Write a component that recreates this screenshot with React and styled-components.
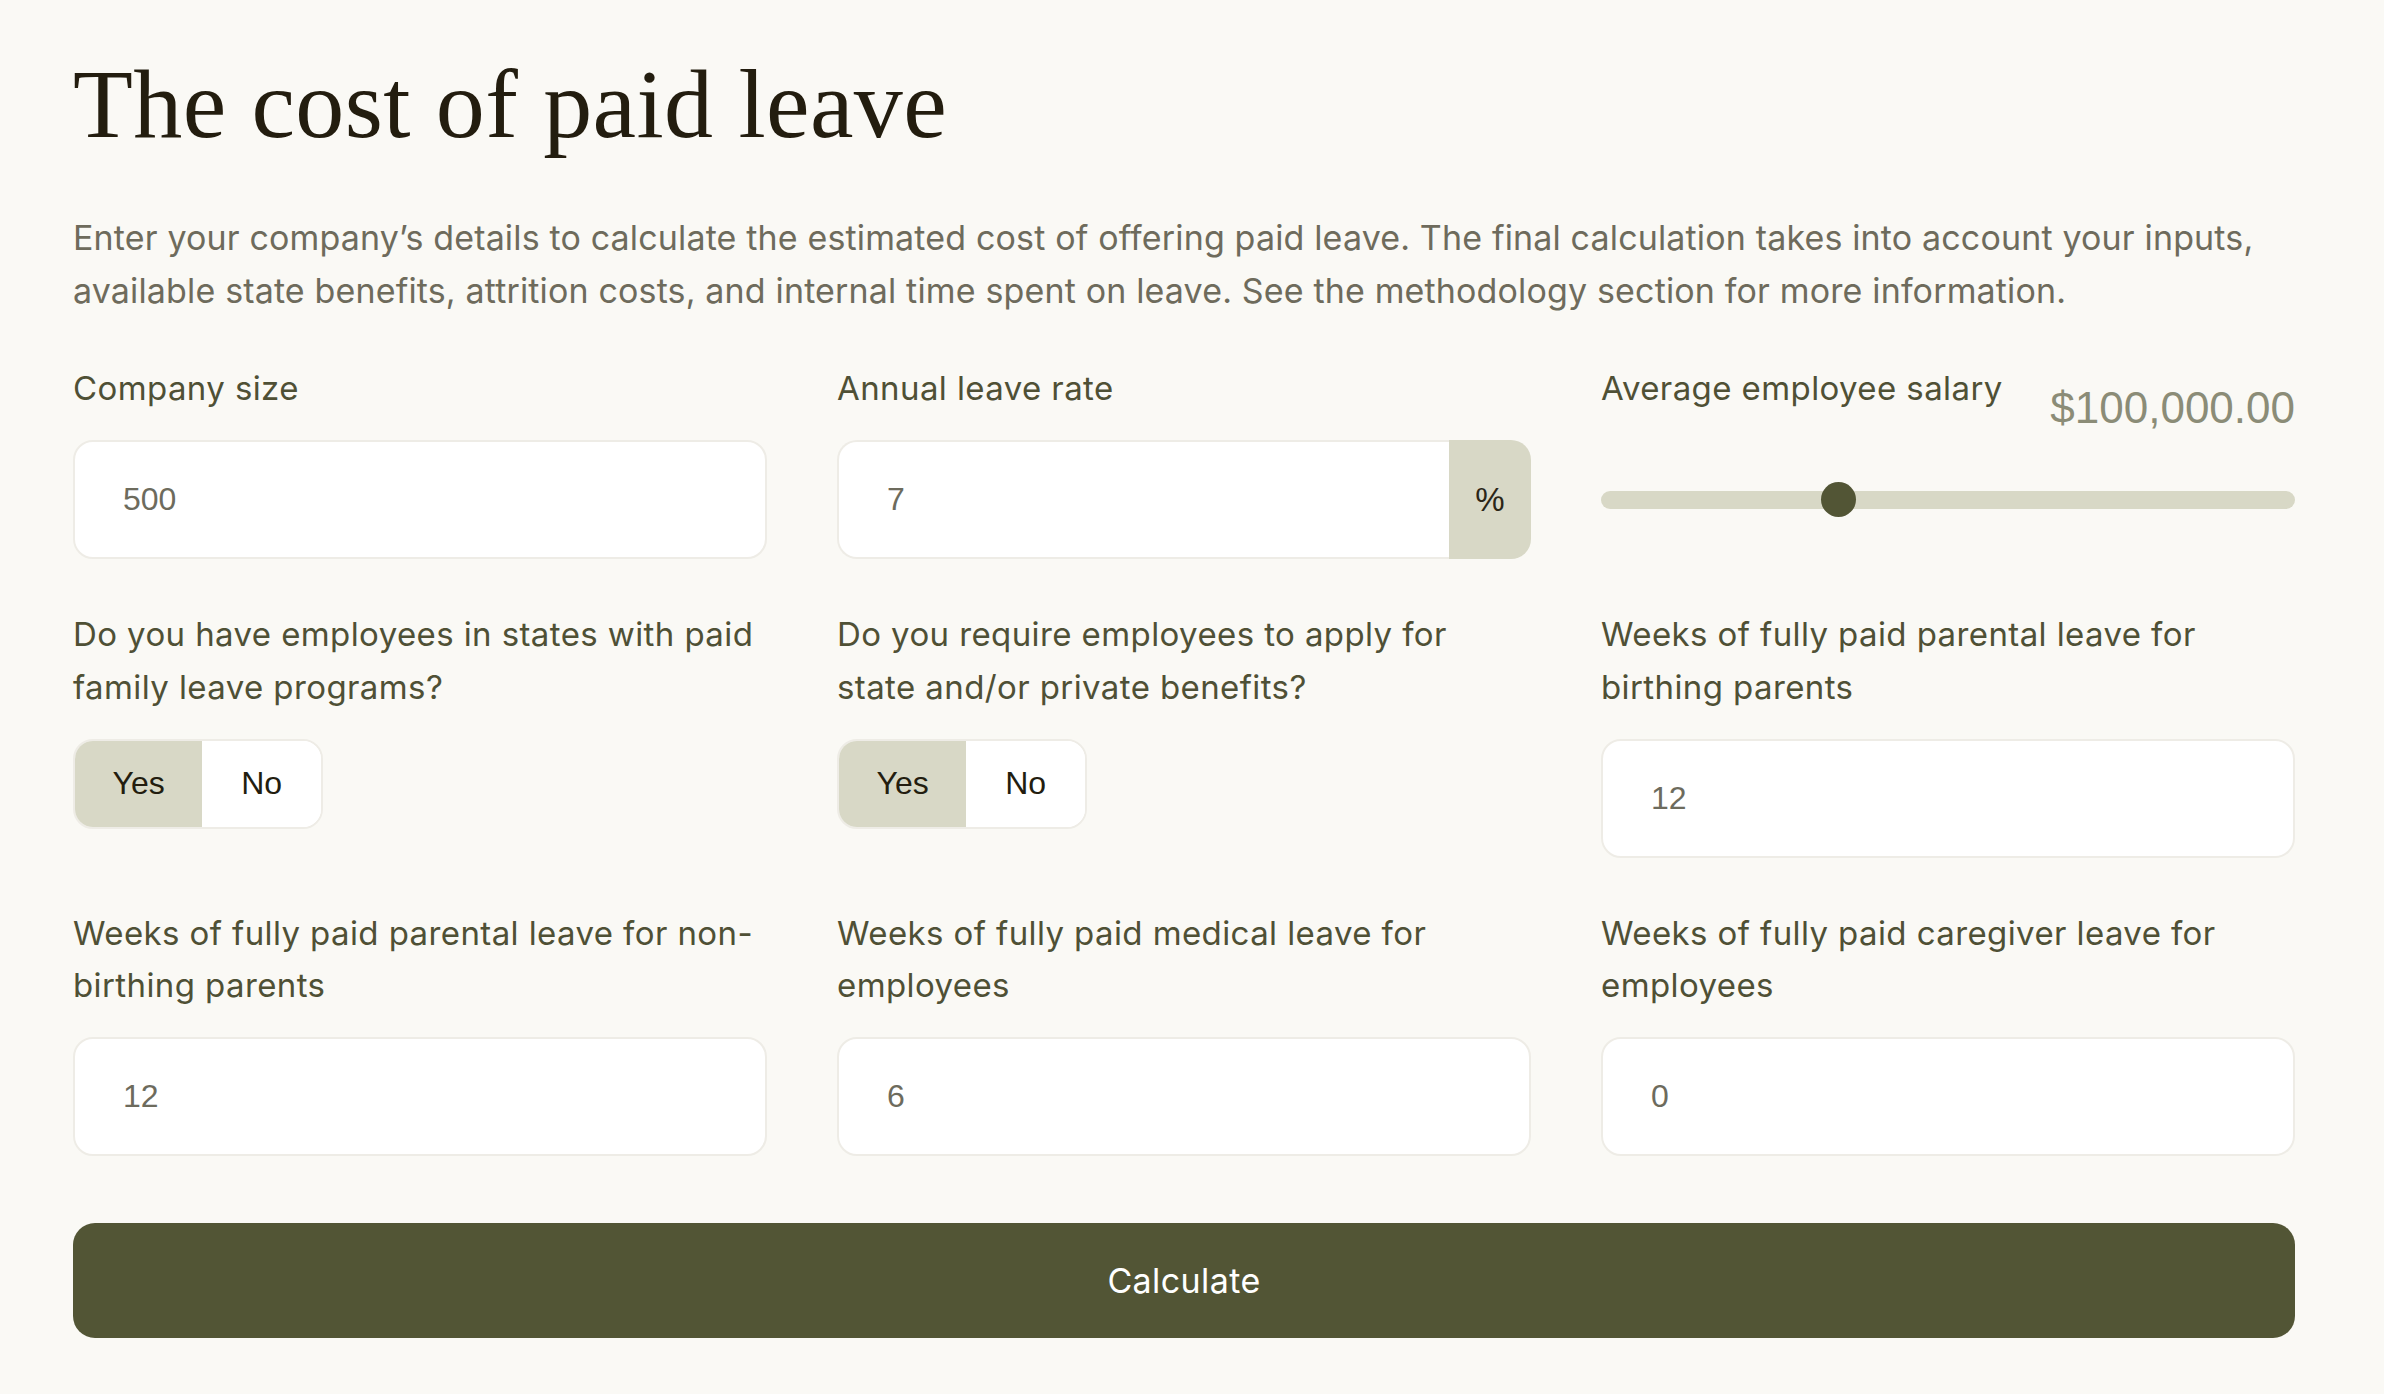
import React, { useState } from "react";
import styled, { createGlobalStyle } from "styled-components";

const GlobalStyle = createGlobalStyle`
  html, body {
    margin: 0;
    padding: 0;
    background: #faf9f5;
  }
  * { box-sizing: border-box; }
`;

const Page = styled.main`
  padding: 55px 89px 56px 73px;
  font-family: Inter, "Liberation Sans", sans-serif;
  color: #4f5035;
`;

const Title = styled.h1`
  margin: 0;
  font-family: "Liberation Serif", serif;
  font-weight: 400;
  font-size: 98px;
  line-height: 98px;
  letter-spacing: 0.4px;
  color: #231d0f;
`;

const Intro = styled.p`
  margin: 59px 0 0;
  font-size: 34px;
  line-height: 52.5px;
  letter-spacing: 0.15px;
  color: #6e6b5c;
`;

const FormGrid = styled.form`
  margin-top: 45px;
  display: grid;
  grid-template-columns: repeat(3, 1fr);
  column-gap: 70px;
  row-gap: 49px;
  align-items: start;
`;

const Field = styled.div`
  display: flex;
  flex-direction: column;
  gap: 25.5px;
  min-width: 0;
`;

const Label = styled.label`
  font-size: 33px;
  line-height: 52.5px;
  letter-spacing: 0.4px;
  color: #4f5035;
`;

const TextInput = styled.input`
  width: 100%;
  height: 119px;
  margin: 0;
  padding: 0 48px;
  border: 2px solid #eeece6;
  border-radius: ${(p) => (p.$grouped ? "20px 0 0 20px" : "20px")};
  border-right-width: ${(p) => (p.$grouped ? "0" : "2px")};
  background: #fff;
  font-family: "Liberation Sans", Arial, sans-serif;
  font-size: 32px;
  color: #6d6b5d;
  outline: none;
  min-width: 0;
`;

const InputGroup = styled.div`
  display: flex;
  width: 100%;
`;

const Addon = styled.span`
  flex: 0 0 82px;
  height: 119px;
  display: flex;
  align-items: center;
  justify-content: center;
  background: #d8d8c6;
  border-radius: 0 20px 20px 0;
  font-family: "Liberation Sans", Arial, sans-serif;
  font-size: 33px;
  color: #2b2617;
`;

const Segmented = styled.div`
  display: inline-flex;
  align-self: flex-start;
  height: 90px;
  border: 2px solid #eeece6;
  border-radius: 20px;
  overflow: hidden;
  background: #fff;
`;

const SegButton = styled.button`
  min-width: 119px;
  padding: 0 37.5px;
  border: 0;
  margin: 0;
  background: ${(p) => (p.$active ? "#d8d8c6" : "#fff")};
  font-family: "Liberation Sans", Arial, sans-serif;
  font-size: 32px;
  color: #231d0f;
  cursor: pointer;
`;

const SalaryHead = styled.div`
  display: flex;
  justify-content: space-between;
  align-items: flex-start;
  height: 52.5px;
`;

const SalaryValue = styled.span`
  margin-top: 23.75px;
  font-family: "Liberation Sans", Arial, sans-serif;
  font-size: 44px;
  line-height: 44px;
  color: #8b8c77;
  white-space: nowrap;
`;

const SliderWrap = styled.div`
  height: 119px;
  display: flex;
  align-items: center;
`;

const Range = styled.input`
  -webkit-appearance: none;
  appearance: none;
  width: 100%;
  height: 35px;
  margin: 0;
  background: transparent;
  cursor: pointer;

  &::-webkit-slider-runnable-track {
    height: 18px;
    border-radius: 9px;
    background: #d8d8c6;
  }
  &::-webkit-slider-thumb {
    -webkit-appearance: none;
    appearance: none;
    width: 35px;
    height: 35px;
    margin-top: -8.5px;
    border: 0;
    border-radius: 50%;
    background: #525535;
  }
  &::-moz-range-track {
    height: 18px;
    border-radius: 9px;
    background: #d8d8c6;
  }
  &::-moz-range-thumb {
    width: 35px;
    height: 35px;
    border: 0;
    border-radius: 50%;
    background: #525535;
  }
`;

const CalcButton = styled.button`
  display: block;
  width: 100%;
  height: 115px;
  margin-top: 67px;
  border: 0;
  border-radius: 22px;
  background: #525535;
  color: #ffffff;
  font-family: Inter, "Liberation Sans", sans-serif;
  font-size: 34px;
  letter-spacing: 0.4px;
  cursor: pointer;
`;

function YesNo({ value, onChange }) {
  return (
    <Segmented role="radiogroup">
      <SegButton type="button" $active={value === "yes"} onClick={() => onChange("yes")}>
        Yes
      </SegButton>
      <SegButton type="button" $active={value === "no"} onClick={() => onChange("no")}>
        No
      </SegButton>
    </Segmented>
  );
}

export default function App() {
  const [statePrograms, setStatePrograms] = useState("yes");
  const [requireApply, setRequireApply] = useState("yes");
  const [salary, setSalary] = useState(100000);

  const fmt = salary.toLocaleString("en-US", {
    style: "currency",
    currency: "USD",
    minimumFractionDigits: 2,
  });

  return (
    <>
      <GlobalStyle />
      <Page>
        <Title>The cost of paid leave</Title>
        <Intro>
          Enter your company’s details to calculate the estimated cost of offering paid leave. The final
          calculation takes into account your inputs, available state benefits, attrition costs, and internal
          time spent on leave. See the methodology section for more information.
        </Intro>
        <FormGrid onSubmit={(e) => e.preventDefault()}>
          <Field>
            <Label>Company size</Label>
            <TextInput defaultValue="500" />
          </Field>
          <Field>
            <Label>Annual leave rate</Label>
            <InputGroup>
              <TextInput $grouped defaultValue="7" />
              <Addon>%</Addon>
            </InputGroup>
          </Field>
          <Field>
            <SalaryHead>
              <Label>Average employee salary</Label>
              <SalaryValue>{fmt}</SalaryValue>
            </SalaryHead>
            <SliderWrap>
              <Range
                type="range"
                min={0}
                max={300000}
                step={1000}
                value={salary}
                onChange={(e) => setSalary(Number(e.target.value))}
              />
            </SliderWrap>
          </Field>

          <Field>
            <Label>Do you have employees in states with paid family leave programs?</Label>
            <YesNo value={statePrograms} onChange={setStatePrograms} />
          </Field>
          <Field>
            <Label>Do you require employees to apply for state and/or private benefits?</Label>
            <YesNo value={requireApply} onChange={setRequireApply} />
          </Field>
          <Field>
            <Label>Weeks of fully paid parental leave for birthing parents</Label>
            <TextInput defaultValue="12" />
          </Field>

          <Field>
            <Label>Weeks of fully paid parental leave for non-birthing parents</Label>
            <TextInput defaultValue="12" />
          </Field>
          <Field>
            <Label>Weeks of fully paid medical leave for employees</Label>
            <TextInput defaultValue="6" />
          </Field>
          <Field>
            <Label>Weeks of fully paid caregiver leave for employees</Label>
            <TextInput defaultValue="0" />
          </Field>
        </FormGrid>
        <CalcButton type="button">Calculate</CalcButton>
      </Page>
    </>
  );
}
